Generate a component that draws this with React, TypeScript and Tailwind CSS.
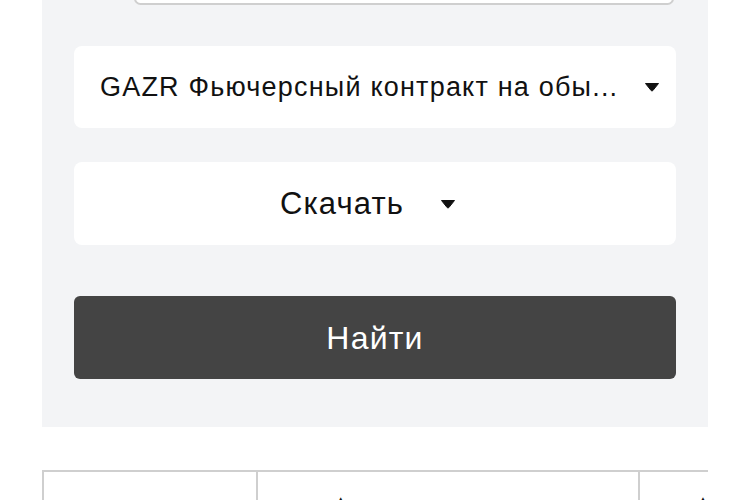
import React from "react";

function Caret() {
  return (
    <svg width="16" height="10" viewBox="0 0 16 10" className="shrink-0">
      <path d="M1.5 1.5 H14.5 L8.8 8.6 Q8 9.5 7.2 8.6 Z" fill="#111" stroke="#111" strokeWidth="1" strokeLinejoin="round" />
    </svg>
  );
}

export default function App() {
  return (
    <div className="w-[750px] h-[500px] overflow-hidden bg-white" style={{ fontFamily: "'Liberation Sans', Arial, sans-serif" }}>
      <div className="ml-[42px] w-[666px] h-[427px] bg-[#f3f4f6] flex flex-col">
        <div className="ml-[92px] mr-[34px] h-[13px] -mt-[8px] bg-white border-2 border-[#cfcfcf] rounded-[8px]" />
        <div className="mx-[32px] mt-[41px] h-[82px] bg-white rounded-[8px] flex items-center justify-between pl-[26px] pr-[16px]">
          <span className="text-[27px] leading-[32px] tracking-[1.2px] text-[#111] whitespace-nowrap">GAZR Фьючерсный контракт на обы...</span>
          <Caret />
        </div>
        <div className="mx-[32px] mt-[34px] h-[83px] bg-white rounded-[8px] flex items-center justify-center gap-[36px] pr-[14px]">
          <span className="text-[31px] leading-[36px] tracking-[1.1px] text-[#111]">Скачать</span>
          <Caret />
        </div>
        <button className="mx-[32px] mt-[51px] h-[83px] bg-[#444444] rounded-[6px] flex items-center justify-center text-white text-[32px] leading-[38px] tracking-[1.2px]">
          Найти
        </button>
      </div>
      <div className="ml-[42px] mt-[43px] w-[666px] border-t-2 border-l-2 border-[#cfcfcf] flex h-[40px]">
        <div className="w-[214px] border-r-2 border-[#cfcfcf]" />
        <div className="w-[383px] border-r-2 border-[#cfcfcf] pl-[78px] pt-[23px] text-[10px] leading-none text-[#111]">▲</div>
        <div className="flex-1 pl-[58px] pt-[23px] text-[10px] leading-none text-[#111]">▲</div>
      </div>
    </div>
  );
}
